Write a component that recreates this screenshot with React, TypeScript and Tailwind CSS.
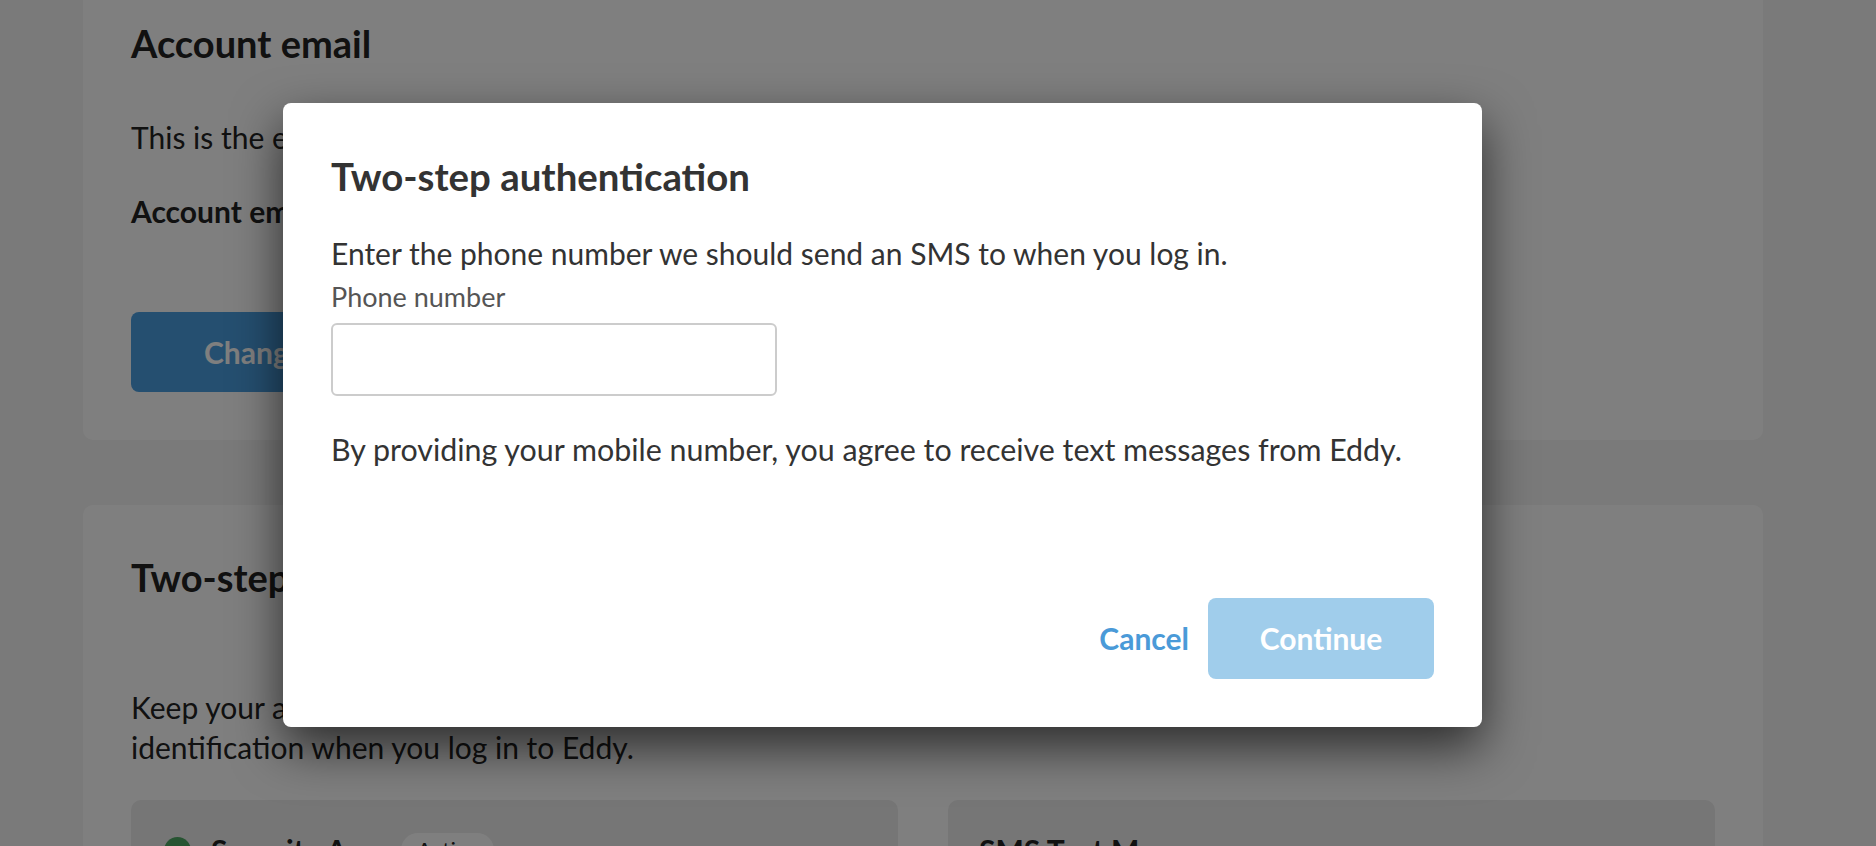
import React from "react";

export default function App() {
  return (
    <div className="relative w-[1876px] h-[846px] overflow-hidden bg-[#f4f4f4] font-[Lato,sans-serif] text-[#222]">
      {/* Page behind the modal */}
      <div className="flex flex-col pl-[83px]">
        <section className="-mt-[20px] w-[1680px] rounded-[10px] bg-white px-[48px] pt-[41px] pb-[48px]">
          <h2 className="text-[38px] leading-[44px] font-bold">Account email</h2>
          <p className="mt-[52px] text-[30px] leading-[40px]">
            This is the email address you use to log in to Eddy and receive notifications.
          </p>
          <p className="mt-[34px] text-[30px] leading-[40px] font-bold">
            Account email: <span className="font-normal">jordan.miller@example.com</span>
          </p>
          <button className="mt-[81px] flex h-[80px] items-center justify-center rounded-[8px] bg-[#4a9ee0] px-[73px] text-[30px] font-bold text-white">
            Change email
          </button>
        </section>

        <section className="mt-[65px] w-[1680px] rounded-[10px] bg-white px-[48px] pt-[50px] pb-[48px]">
          <h2 className="text-[38px] leading-[44px] font-bold">Two-step authentication</h2>
          <p className="mt-[88px] text-[30px] leading-[40px]">
            Keep your account secure by turning on two-step authentication. We will ask for additional
            <br />
            identification when you log in to Eddy.
          </p>
          <div className="mt-[33px] grid grid-cols-2 gap-[50px]">
            <div className="h-[200px] rounded-[10px] bg-[#ececec] px-[33px] pt-[30px]">
              <div className="flex items-center gap-[20px]">
                <span className="h-[27px] w-[27px] rounded-full bg-[#4fa865]" />
                <span className="text-[30px] leading-[40px] font-bold">Security App</span>
                <span className="rounded-full bg-white px-[16px] text-[22px] leading-[34px]">Active</span>
              </div>
            </div>
            <div className="h-[200px] rounded-[10px] bg-[#ececec] px-[31px] pt-[30px]">
              <div className="flex items-center">
                <span className="text-[30px] leading-[40px] font-bold">SMS Text Message</span>
              </div>
            </div>
          </div>
        </section>
      </div>

      {/* Overlay */}
      <div className="absolute inset-0 bg-black/50" />

      {/* Dialog */}
      <div className="absolute left-[283px] top-[103px] flex h-[624px] w-[1199px] flex-col rounded-[8px] bg-white px-[48px] pt-[51px] pb-[48px] text-[#333] shadow-[0_20px_50px_rgba(0,0,0,0.65)]">
        <h2 className="text-[38.4px] leading-[44px] font-bold">Two-step authentication</h2>
        <p className="mt-[35px] text-[30px] leading-[40px]">
          Enter the phone number we should send an SMS to when you log in.
        </p>
        <label className="mt-[8px] text-[27px] leading-[32px] text-[#555]">Phone number</label>
        <input
          type="tel"
          className="mt-[10px] h-[73px] w-[446px] rounded-[6px] border-2 border-[#cccccc] bg-white px-[14px] text-[28px] outline-none"
        />
        <p className="mt-[33px] text-[30.4px] leading-[40px]">
          By providing your mobile number, you agree to receive text messages from Eddy.
        </p>
        <div className="mt-auto flex items-center justify-end gap-[19px]">
          <button className="text-[30px] font-bold text-[#4a9ad8]">Cancel</button>
          <button className="flex h-[81px] w-[226px] items-center justify-center rounded-[8px] bg-[#a0cdeb] text-[30px] font-bold text-white">
            Continue
          </button>
        </div>
      </div>
    </div>
  );
}
